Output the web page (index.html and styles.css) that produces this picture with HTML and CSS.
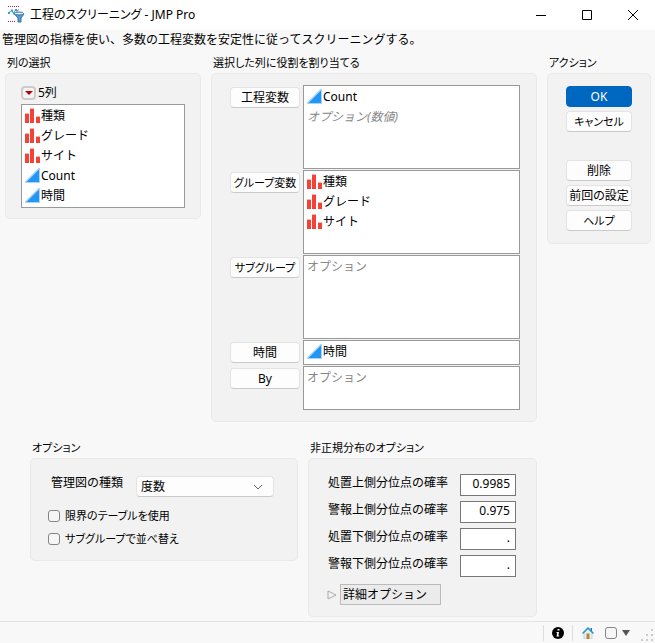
FILE: index.html
```html
<!DOCTYPE html>
<html lang="ja">
<head>
<meta charset="utf-8">
<meta name="viewport" content="width=device-width, initial-scale=1">
<title>工程のスクリーニング - JMP Pro</title>
<link rel="stylesheet" href="styles.css">
</head>
<body>
<svg class="defs" aria-hidden="true">
  <symbol id="nominal" viewBox="0 0 16 16">
    <path fill="#fbb4ae" d="M0 5h4v10H0zM5 0h4v15H5zM11 8h4v7h-4z"/>
    <path fill="#f44336" d="M0 6h4v9H0zM5 1h4v14H5zM11 9h4v6h-4z"/>
  </symbol>
  <symbol id="continuous" viewBox="0 0 16 16">
    <path fill="#a6d4fa" d="M0 15V13.500L13.500 0H15v15z"/>
    <path fill="#2196f3" d="M1.500 14L14 1.500V14z"/>
  </symbol>
</svg>

<header class="titlebar">
  <svg class="app-icon" viewBox="0 0 16 18" aria-hidden="true">
    <path d="M0 .5h11M0 15.500h7" stroke="#b3204b" stroke-dasharray="1 1"/>
    <path d="M.5 7L3.500 4.500l2 3L7.500 4l1.500 1.500L10.500 3.500" fill="none" stroke="#3a9bc8"/>
    <path d="M0 6h2v2H0zM3 3.500h2v2H3zM5 6.500h2v2H5zM7 3h2v2H7z" fill="#3a9bc8"/>
    <path d="M6.500 8L10 12v4h3v-4l3-4z" fill="#5b9dcc" stroke="#3273a8"/>
    <ellipse cx="11" cy="7.500" rx="4.500" ry="1.500" fill="#e4f3fb" stroke="#3273a8"/>
  </svg>
  <h1>工程のスクリーニング - JMP Pro</h1>
  <div class="window-controls">
    <button type="button" aria-label="最小化"><svg viewBox="0 0 12 12"><path d="M1 6.500h10"/></svg></button>
    <button type="button" aria-label="最大化"><svg viewBox="0 0 12 12"><path d="M1.500 1.500h9v9h-9z"/></svg></button>
    <button type="button" aria-label="閉じる"><svg viewBox="0 0 12 12"><path d="M1 1l10 10M11 1L1 11"/></svg></button>
  </div>
</header>

<main>
  <p class="description">管理図の指標を使い、多数の工程変数を安定性に従ってスクリーニングする。</p>

  <div class="top-row">
    <section>
      <h2>列の選択</h2>
      <div class="panel columns">
        <div class="column-count">
          <button type="button" class="red-triangle" aria-label="列メニュー"><svg viewBox="0 0 8 4"><path d="M0 0h8L4 4z"/></svg></button>
          <span>5列</span>
        </div>
        <ul class="list">
          <li><svg><use href="#nominal"/></svg>種類</li>
          <li><svg><use href="#nominal"/></svg>グレード</li>
          <li><svg><use href="#nominal"/></svg>サイト</li>
          <li><svg><use href="#continuous"/></svg>Count</li>
          <li><svg><use href="#continuous"/></svg>時間</li>
        </ul>
      </div>
    </section>

    <section>
      <h2>選択した列に役割を割り当てる</h2>
      <div class="panel roles">
        <button type="button" class="button">工程変数</button>
        <ul class="list tall">
          <li><svg><use href="#continuous"/></svg>Count</li>
          <li class="hint"><em>オプション(数値)</em></li>
        </ul>
        <button type="button" class="button compact">グループ変数</button>
        <ul class="list tall">
          <li><svg><use href="#nominal"/></svg>種類</li>
          <li><svg><use href="#nominal"/></svg>グレード</li>
          <li><svg><use href="#nominal"/></svg>サイト</li>
        </ul>
        <button type="button" class="button compact">サブグループ</button>
        <ul class="list tall">
          <li class="hint">オプション</li>
        </ul>
        <button type="button" class="button">時間</button>
        <ul class="list short">
          <li><svg><use href="#continuous"/></svg>時間</li>
        </ul>
        <button type="button" class="button">By</button>
        <ul class="list medium">
          <li class="hint">オプション</li>
        </ul>
      </div>
    </section>

    <section>
      <h2>アクション</h2>
      <div class="panel actions">
        <button type="button" class="button primary">OK</button>
        <button type="button" class="button compact">キャンセル</button>
        <div class="action-group">
          <button type="button" class="button">削除</button>
          <button type="button" class="button">前回の設定</button>
          <button type="button" class="button compact">ヘルプ</button>
        </div>
      </div>
    </section>
  </div>

  <div class="bottom-row">
    <section>
      <h2>オプション</h2>
      <div class="panel options">
        <div class="chart-type">
          <label for="chart-type">管理図の種類</label>
          <div class="select">
            <select id="chart-type"><option>度数</option></select>
            <svg viewBox="0 0 10 6" aria-hidden="true"><path d="M1 1l4 4 4-4"/></svg>
          </div>
        </div>
        <label class="check compact"><input type="checkbox">限界のテーブルを使用</label>
        <label class="check compact"><input type="checkbox">サブグループで並べ替え</label>
      </div>
    </section>

    <section>
      <h2>非正規分布のオプション</h2>
      <div class="panel quantiles">
        <div class="fields">
          <label for="q1">処置上側分位点の確率</label><input id="q1" type="text" value="0.9985">
          <label for="q2">警報上側分位点の確率</label><input id="q2" type="text" value="0.975">
          <label for="q3">処置下側分位点の確率</label><input id="q3" type="text" value=".">
          <label for="q4">警報下側分位点の確率</label><input id="q4" type="text" value=".">
        </div>
        <div class="disclosure">
          <svg viewBox="0 0 10 10" aria-hidden="true"><path d="M1 1v8l8-4z"/></svg>
          <button type="button" aria-expanded="false">詳細オプション</button>
        </div>
      </div>
    </section>
  </div>
</main>

<footer class="statusbar">
  <button type="button" class="status-item" aria-label="情報">
    <svg viewBox="0 0 12 12"><circle cx="6" cy="6" r="6"/><path d="M5.500 2h2v1.500h-2zM4.500 5H7l-.7 3.500h.9V9.500H4.500l.7-3.500h-.7z" fill="#fff"/></svg>
  </button>
  <button type="button" class="status-item home" aria-label="ホーム">
    <svg viewBox="0 0 12 12"><path d="M2 6l4-4 4 4v6H2z" fill="#e8f0f4" stroke="#8fb4c8" stroke-width=".5"/><path d="M8.500 1H10v3H8.500z" fill="#2878a8"/><path d="M.5 6.500L6 1l5.500 5.500" fill="none" stroke="#2e94cc" stroke-width="1.500"/><path d="M4.500 6.500h3V12h-3z" fill="#b5862c"/></svg>
  </button>
  <input type="checkbox" aria-label="ウィンドウの選択">
  <button type="button" class="status-menu" aria-label="メニュー"><svg viewBox="0 0 8 6"><path d="M0 0h8L4 6z" fill="#555"/></svg></button>
  <svg class="grip" viewBox="0 0 12 12" aria-hidden="true"><path fill="#ccc" d="M10 0h2v2h-2zM10 5h2v2h-2zM5 5h2v2H5zM10 10h2v2h-2zM5 10h2v2H5zM0 10h2v2H0z"/></svg>
</footer>
</body>
</html>
```
FILE: styles.css
```css
* {
  box-sizing: border-box;
}

body {
  display: flex;
  flex-direction: column;
  min-height: 100vh;
  margin: 0;
  background: #f8f8f8;
  color: #000;
  font: 12px/20px "Noto Sans", "Noto Sans CJK JP", sans-serif;
}

button,
input,
select {
  margin: 0;
  padding: 0;
  border: 0;
  background: none;
  color: inherit;
  font: inherit;
}

svg {
  display: block;
  flex: none;
}

h1,
h2,
p,
ul {
  margin: 0;
  padding: 0;
  font-size: 12px;
  font-weight: 400;
}

.defs {
  display: none;
}

/* Title bar */

.titlebar {
  display: flex;
  align-items: center;
  gap: 6px;
  height: 30px;
  padding-left: 8px;
  background: #fff;
}

.titlebar h1 {
  flex: 1;
  font-feature-settings: "palt";
}

.app-icon {
  width: 16px;
  height: 18px;
}

.window-controls {
  display: flex;
}

.window-controls button {
  display: grid;
  place-items: center;
  width: 46px;
  height: 28px;
}

.window-controls button:last-child {
  width: 45px;
}

.window-controls svg {
  width: 12px;
  height: 12px;
  fill: none;
  stroke: #000;
}

/* Panels */

main {
  flex: 1;
}

.description {
  padding-left: 2px;
}

h2 {
  padding: 3px 2px 0;
  font-size: 11px;
  font-feature-settings: "palt";
}

.panel {
  border: 1px solid #e9e9e9;
  border-radius: 5px;
  background: #f2f2f2;
}

.top-row,
.bottom-row {
  display: grid;
  align-items: start;
  gap: 10px;
}

.top-row {
  grid-template-columns: 196px 1fr 104px;
  padding: 0 4px 0 5px;
}

.bottom-row {
  grid-template-columns: 268px 229px;
  padding: 13px 0 4px 30px;
}

.button {
  height: 21px;
  border: 1px solid #e3e3e3;
  border-bottom-color: #cacaca;
  border-radius: 4px;
  background: #fdfdfd;
  line-height: 19px;
  white-space: nowrap;
  font-feature-settings: "palt";
}

.compact {
  font-size: 11px;
}

.primary {
  border-color: #0067c0;
  background: #0067c0;
  color: #fff;
}

.list {
  padding: 1px 3px;
  border: 1px solid #999;
  background: #fff;
  list-style: none;
}

.list li {
  display: flex;
  align-items: center;
  height: 20px;
}

.list svg {
  width: 16px;
  height: 16px;
}

.list .hint {
  color: #888;
}

.columns {
  padding: 8px 15px 10px;
}

.column-count {
  display: flex;
  align-items: center;
  gap: 2px;
  height: 22px;
  font-feature-settings: "palt";
}

.red-triangle {
  display: grid;
  place-items: center;
  width: 15px;
  height: 14px;
  border: 2px solid #ccc;
  border-radius: 4px;
  background: #f4f4f4;
}

.red-triangle svg {
  width: 8px;
  height: 4px;
  fill: #c00000;
}

.roles {
  display: grid;
  grid-template-columns: 70px 1fr;
  align-items: start;
  gap: 1px 3px;
  padding: 11px 16px 11px 18px;
}

.roles .button {
  margin-top: 2px;
}

.short {
  height: 25px;
}

.medium {
  height: 44px;
}

.tall {
  height: 84px;
}

.actions,
.action-group {
  display: grid;
  gap: 4px;
}

.actions {
  padding: 12px 18px;
}

.action-group {
  margin-top: 24px;
}

/* Options */

.options {
  display: grid;
  justify-items: start;
  padding: 14px 17px 10px;
}

.chart-type {
  display: flex;
  gap: 13px;
  padding-left: 3px;
  margin-bottom: 7px;
}

.select {
  display: grid;
  align-items: center;
  margin-top: 3px;
}

.select select,
.select svg {
  grid-area: 1 / 1;
}

.select select {
  width: 138px;
  height: 21px;
  padding-left: 4px;
  border: 1px solid #e3e3e3;
  border-bottom-color: #cacaca;
  border-radius: 4px;
  background: #fdfdfd;
  appearance: none;
}

.select svg {
  width: 10px;
  height: 6px;
  margin-right: 11px;
  justify-self: end;
  fill: none;
  stroke: #666;
  pointer-events: none;
}

.check {
  display: flex;
  align-items: center;
  gap: 5px;
  height: 23px;
  font-feature-settings: "palt";
}

input[type="checkbox"] {
  width: 12px;
  height: 12px;
  border: 1px solid #858585;
  border-radius: 3px;
  background: #f6f6f6;
  appearance: none;
}

.quantiles {
  padding: 15px 20px 11px 18px;
}

.fields {
  display: grid;
  grid-template-columns: 1fr 56px;
  gap: 5px 10px;
  padding-left: 1px;
}

.fields label {
  line-height: 18px;
}

.fields input {
  width: 100%;
  height: 22px;
  padding: 0 5px 3px;
  border: 1px solid #777;
  background: #fff;
  text-align: right;
}

.disclosure {
  display: flex;
  align-items: center;
  gap: 3px;
  margin-top: 7px;
}

.disclosure svg {
  width: 10px;
  height: 10px;
  fill: none;
  stroke: #aaa;
}

.disclosure button {
  width: 101px;
  height: 21px;
  padding-left: 2px;
  border: 1px solid #bbb;
  background: #ebebeb;
  line-height: 18px;
  text-align: left;
}

/* Status bar */

.statusbar {
  display: flex;
  align-items: center;
  justify-content: flex-end;
  height: 22px;
  padding-right: 2px;
  border-top: 1px solid #e4e4e4;
}

.status-item {
  display: grid;
  place-items: center;
  width: 29px;
  height: 16px;
  border-left: 1px solid #ddd;
}

.status-item svg {
  width: 12px;
  height: 12px;
}

.status-item.home {
  width: 30px;
}

.statusbar input {
  margin-left: 3px;
}

.status-menu {
  margin-left: 5px;
}

.status-menu svg {
  width: 8px;
  height: 6px;
}

.grip {
  align-self: flex-end;
  width: 12px;
  height: 12px;
  margin: 0 0 2px 11px;
}
```
